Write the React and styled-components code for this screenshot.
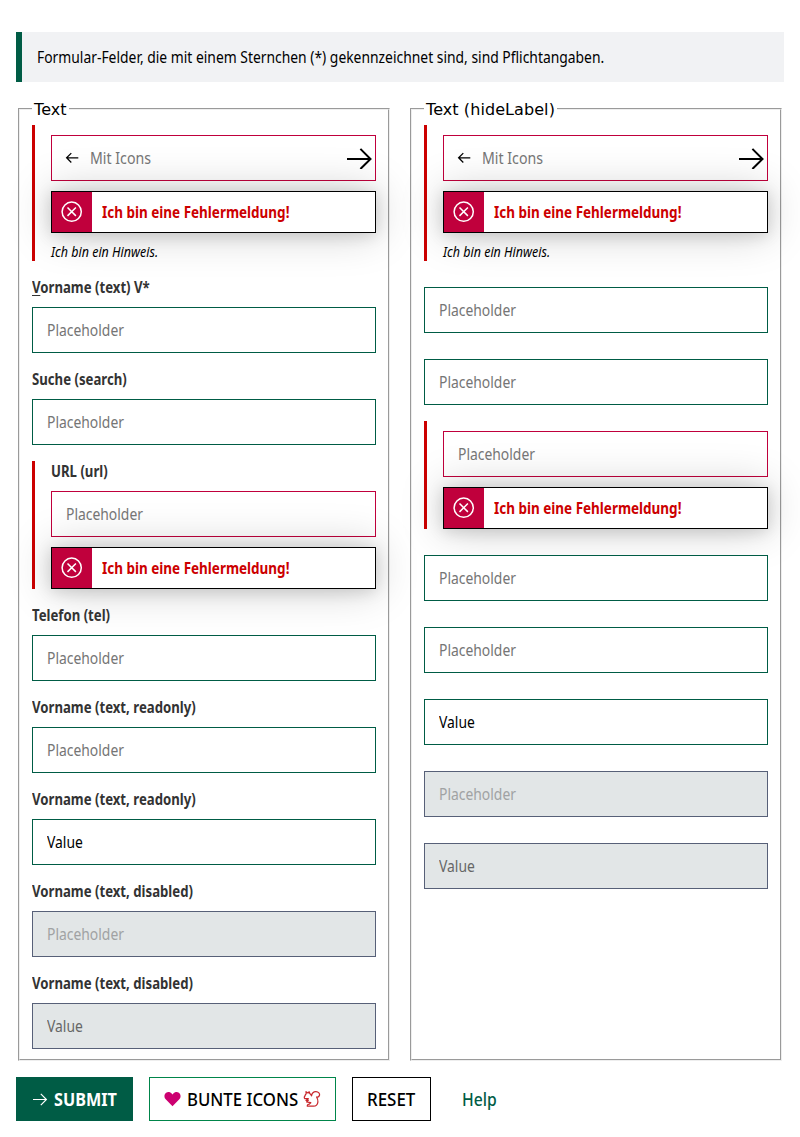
import React from "react";
import styled, { createGlobalStyle, css } from "styled-components";

const color = {
  green: "#005c45",
  greenLight: "#00854a",
  crimson: "#c0003c",
  red: "#cc0000",
  label: "#333333",
  placeholder: "#757575",
  disabledBg: "#e2e6e7",
  disabledBorder: "#576078",
  notice: "#f1f2f4",
};

const GlobalStyle = createGlobalStyle`
  *, *::before, *::after { box-sizing: border-box; }
  body {
    margin: 0;
    background: #fff;
    color: #000;
    font: 16px/20px "Noto Sans", sans-serif;
  }
`;

const Page = styled.main`
  padding: 32px 16px 16px;
`;

const narrow = (ratio) => css`
  transform: scaleX(${ratio});
  transform-origin: left center;
  white-space: nowrap;
`;

const Notice = styled.div`
  display: flex;
  align-items: center;
  height: 50px;
  padding-left: 15px;
  border-left: 6px solid ${color.green};
  background: ${color.notice};
`;

const NoticeText = styled.p`
  margin: 0;
  ${narrow(0.867)}
`;

const Columns = styled.div`
  display: grid;
  grid-template-columns: 1fr 1fr;
  gap: 16px;
  margin-top: 18px;
`;

const Group = styled.fieldset`
  min-width: 0;
  margin: 0 2px;
  padding: 7px 12px 10px;
  border: 2px groove #eee;
`;

const Legend = styled.legend`
  height: 18px;
  padding: 0 2px;
  font: 16px/19px "DejaVu Sans", sans-serif;
  letter-spacing: 0.08px;
`;

const Stack = styled.div`
  display: grid;
  gap: 16px;
`;

const Field = styled.div`
  display: flex;
  flex-direction: column;
  gap: 10px;
  padding-top: ${(p) => (p.$bare ? "10px" : "0")};
  ${(p) =>
    p.$invalid &&
    css`
      padding-left: 16px;
      border-left: 3px solid ${color.red};
    `}
`;

const Label = styled.label`
  align-self: flex-start;
  height: 20px;
  line-height: 20px;
  color: ${color.label};
  font-weight: 700;
  ${narrow(0.823)}
`;

const AccessKey = styled.span`
  text-decoration: underline;
  text-decoration-thickness: 1px;
  text-underline-offset: 2px;
`;

const InputBox = styled.div`
  display: flex;
  align-items: center;
  gap: 9px;
  height: 46px;
  padding: ${(p) => (p.$icons ? "0 3px 0 13px" : "0 14px")};
  border: 1px solid ${(p) => (p.$invalid ? color.crimson : color.green)};
  background: #fff;
  ${(p) =>
    p.$disabled &&
    css`
      background: ${color.disabledBg};
      border-color: ${color.disabledBorder};
    `}
`;

const InputSlot = styled.div`
  flex: 1;
  min-width: 0;
`;

const Input = styled.input`
  display: block;
  width: 115%;
  height: 24px;
  padding: 0;
  border: 0;
  outline: 0;
  background: transparent;
  color: #000;
  font: inherit;
  ${(p) => narrow(p.$wide ? 0.885 : 0.868)}

  &::placeholder {
    color: ${color.placeholder};
    opacity: 1;
  }
  &:disabled {
    color: #666;
  }
  &:disabled::placeholder {
    color: #a0a2a3;
  }
`;

const Alert = styled.div`
  display: flex;
  height: 42px;
  border: 1px solid #000;
  background: #fff;
  box-shadow: 0 2px 16px rgba(0, 0, 0, 0.14), 0 0 44px rgba(0, 0, 0, 0.22);
`;

const AlertIcon = styled.span`
  display: flex;
  align-items: center;
  justify-content: center;
  width: 40px;
  background: ${color.crimson};
`;

const AlertText = styled.strong`
  margin: 10px 0 0 10px;
  color: ${color.red};
  font-weight: 700;
  ${narrow(0.842)}
`;

const Hint = styled.em`
  align-self: flex-start;
  height: 20px;
  margin-top: -2px;
  font-size: 14px;
  line-height: 22px;
  ${narrow(0.893)}
`;

const Actions = styled.div`
  display: flex;
  gap: 16px;
  margin-top: 16px;
`;

const buttonTones = {
  primary: css`
    width: 117px;
    border-color: ${color.green};
    background: ${color.green};
    color: #fff;
    font-weight: 700;
  `,
  secondary: css`
    width: 187px;
    border-color: ${color.greenLight};
  `,
  normal: css`
    width: 79px;
    border-color: #000;
  `,
  ghost: css`
    width: 64px;
    border-color: transparent;
    color: ${color.green};
  `,
};

const Button = styled.button`
  display: flex;
  align-items: center;
  gap: 6px;
  height: 44px;
  padding: 0 14px;
  border: 1px solid;
  background: #fff;
  color: #000;
  font: 500 18px/24px "Noto Sans", sans-serif;
  text-align: left;
  ${(p) => buttonTones[p.$tone]}
`;

const ButtonText = styled.span`
  flex: none;
  width: ${(p) => p.$width}px;
  ${(p) => narrow(p.$ratio)}
`;

const Icon = styled.svg`
  flex: none;
  display: block;
  fill: none;
  stroke: currentColor;
`;

const ArrowLeft = () => (
  <Icon width="16" height="16" viewBox="0 0 16 16" strokeWidth="1.25">
    <path d="M13.3 7.800H1.700M6.300 3.100 1.600 7.800l4.700 4.700" />
  </Icon>
);

const ArrowRightLarge = () => (
  <Icon width="25" height="22" viewBox="0 0 25 22" strokeWidth="2">
    <path d="M0 12h23.500M13.400 1.900 23.500 12 13.400 22" />
  </Icon>
);

const ArrowRightSmall = () => (
  <Icon width="17" height="16" viewBox="0 0 17 16" strokeWidth="1.2">
    <path d="M2 8.500h13.400M9.800 2.900l5.600 5.600-5.600 5.600" />
  </Icon>
);

const CircleX = () => (
  <Icon width="22" height="22" viewBox="0 0 22 22" strokeWidth="1.5" color="#fff">
    <circle cx="10.700" cy="10.700" r="9.600" />
    <path d="M6.500 6.500l8.400 8.400M14.900 6.500l-8.400 8.400" />
  </Icon>
);

const HeartShape = styled(Icon)`
  fill: #cc0070;
  stroke: none;
`;

const Heart = () => (
  <HeartShape width="17" height="16" viewBox="0 0 17 16">
    <path d="M8.500 15.200 1.700 8.300C-.2 6.300.1 3.200 2.100 1.800 4 .5 6.300 1 7.600 2.500l.9 1 .9-1C10.700 1 13 .5 14.900 1.800c2 1.400 2.300 4.500.4 6.500z" />
  </HeartShape>
);

const SquirrelShape = styled(Icon)`
  stroke: #c8282d;
`;

const Squirrel = () => (
  <SquirrelShape width="18" height="18" viewBox="0 0 18 18" strokeWidth="1.25" strokeLinejoin="round">
    <path d="M3.200 3.700 3 1.700 5 3 6.200 1.800 6.800 3.600C7.600 4.200 8.200 5 8.500 5.800C9 3.300 10.800 1.600 13 1.700C15.500 1.800 17 3.600 16.500 5.300C16.100 6.700 14.900 7.300 13.600 7C14.500 8.500 15.100 10 14.900 12C14.600 14.500 13 16.200 10.500 16.200H4.300C4.100 15 5 14 6.400 14L7.800 12.700L6 12.300L3.600 12L5.300 10.200L3 10.400L5.300 8.700L1.800 8.600C1 7.800 1.200 6.700 1.900 6C2.200 5 2.500 4.300 3.200 3.700Z" />
  </SquirrelShape>
);

const ErrorAlert = () => (
  <Alert role="alert">
    <AlertIcon>
      <CircleX />
    </AlertIcon>
    <AlertText>Ich bin eine Fehlermeldung!</AlertText>
  </Alert>
);

function TextField({ label, placeholder = "Placeholder", value, invalid, disabled, icons, hint }) {
  return (
    <Field $bare={!label} $invalid={invalid}>
      {label && <Label>{label}</Label>}
      <InputBox $invalid={invalid} $disabled={disabled} $icons={icons}>
        {icons && <ArrowLeft />}
        <InputSlot>
          <Input placeholder={placeholder} defaultValue={value} disabled={disabled} $wide={icons} />
        </InputSlot>
        {icons && <ArrowRightLarge />}
      </InputBox>
      {invalid && <ErrorAlert />}
      {hint && <Hint>{hint}</Hint>}
    </Field>
  );
}

const iconField = { placeholder: "Mit Icons", icons: true, invalid: true, hint: "Ich bin ein Hinweis." };

const labelled = [
  iconField,
  { label: <span><AccessKey>V</AccessKey>orname (text) V*</span> },
  { label: "Suche (search)" },
  { label: "URL (url)", invalid: true },
  { label: "Telefon (tel)" },
  { label: "Vorname (text, readonly)" },
  { label: "Vorname (text, readonly)", value: "Value" },
  { label: "Vorname (text, disabled)", disabled: true },
  { label: "Vorname (text, disabled)", disabled: true, value: "Value" },
];

const unlabelled = [
  iconField,
  {},
  {},
  { invalid: true },
  {},
  {},
  { value: "Value" },
  { disabled: true },
  { disabled: true, value: "Value" },
];

function FieldGroup({ title, fields }) {
  return (
    <Group>
      <Legend>{title}</Legend>
      <Stack>
        {fields.map((field, i) => (
          <TextField key={i} {...field} />
        ))}
      </Stack>
    </Group>
  );
}

export default function App() {
  return (
    <>
      <GlobalStyle />
      <Page>
        <Notice>
          <NoticeText>
            Formular-Felder, die mit einem Sternchen (*) gekennzeichnet sind, sind Pflichtangaben.
          </NoticeText>
        </Notice>
        <Columns>
          <FieldGroup title="Text" fields={labelled} />
          <FieldGroup title="Text (hideLabel)" fields={unlabelled} />
        </Columns>
        <Actions>
          <Button $tone="primary">
            <ArrowRightSmall />
            <ButtonText $width={63} $ratio={0.9}>SUBMIT</ButtonText>
          </Button>
          <Button $tone="secondary">
            <Heart />
            <ButtonText $width={110} $ratio={0.932}>BUNTE ICONS</ButtonText>
            <Squirrel />
          </Button>
          <Button $tone="normal">
            <ButtonText $width={48} $ratio={0.94}>RESET</ButtonText>
          </Button>
          <Button $tone="ghost">
            <ButtonText $width={34} $ratio={0.87}>Help</ButtonText>
          </Button>
        </Actions>
      </Page>
    </>
  );
}
